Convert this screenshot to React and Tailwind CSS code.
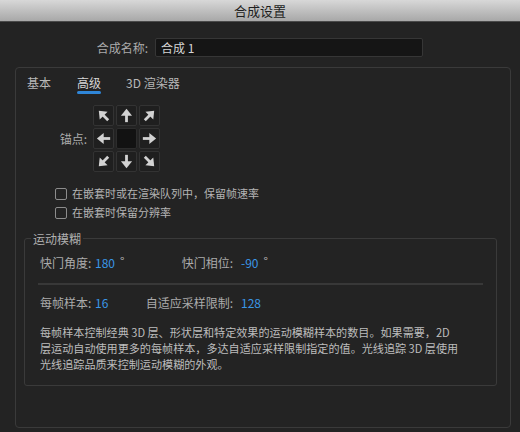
import React from "react";

const Arrow = ({ rot }) => (
  <svg width="15" height="15" viewBox="0 0 14 14" className={rot}>
    <polygon points="7,0.8 1.8,7.2 12.2,7.2" fill="#d2d2d2" />
    <rect x="5.7" y="6" width="2.6" height="7.2" fill="#d2d2d2" />
  </svg>
);

const anchors = [
  "-rotate-45",
  "rotate-0",
  "rotate-45",
  "-rotate-90",
  null,
  "rotate-90",
  "-rotate-135",
  "rotate-180",
  "rotate-135",
];

const Checkbox = ({ label }) => (
  <div className="flex items-center h-[19px]">
    <div className="w-[12px] h-[12px] border border-[#8c8c8c] rounded-[2px]" />
    <span className="ml-[5px] text-[11px] text-[#b4b4b4] leading-[19px]">{label}</span>
  </div>
);

const App = () => {
  return (
    <div className="w-[520px] h-[432px] overflow-hidden bg-[#232323] font-['Noto_Sans_CJK_SC','Noto_Sans',sans-serif] text-[12px]">
      {/* title bar */}
      <div className="h-[22px] bg-gradient-to-b from-[#d8d8d8] to-[#a8a8a8] border-b border-[#4a4a4a] flex items-center justify-center text-[13px] text-[#1e1e1e]">
        合成设置
      </div>

      {/* name */}
      <div className="flex items-center mt-[16px] h-[19px]">
        <div className="w-[148px] text-right text-[#ababab]">合成名称:</div>
        <div className="ml-[7px] w-[268px] h-[19px] bg-[#151515] border border-[#363636] rounded-[2px] flex items-center pl-[5px] text-[#d4d4d4]">
          合成 1
        </div>
      </div>

      {/* main panel */}
      <div className="mt-[10px] ml-[15px] w-[496px] h-[361px] border border-[#3a3a3a] rounded-[4px] flex flex-col">
        {/* tabs */}
        <div className="flex pt-[7px] pl-[11px] leading-[16px]">
          <div className="text-[#b8b8b8]">基本</div>
          <div className="ml-[26px] flex flex-col">
            <span className="text-[#d6d6d6]">高级</span>
            <div className="h-[3px] rounded-full bg-[#2f86d8]" />
          </div>
          <div className="ml-[25px] text-[#b8b8b8]">3D 渲染器</div>
        </div>

        {/* anchor */}
        <div className="flex items-center mt-[11px]">
          <div className="w-[71px] text-right text-[#ababab]">锚点:</div>
          <div className="ml-[6px] grid grid-cols-3 gap-[2px]">
            {anchors.map((r, i) => (
              <div
                key={i}
                className={`w-[21px] h-[21px] border rounded-[2px] flex items-center justify-center ${
                  r ? "bg-[#1f1f1f] border-[#333333]" : "bg-[#121212] border-[#2c2c2c]"
                }`}
              >
                {r && <Arrow rot={r} />}
              </div>
            ))}
          </div>
        </div>

        {/* checkboxes */}
        <div className="mt-[12px] pl-[39px] flex flex-col">
          <Checkbox label="在嵌套时或在渲染队列中，保留帧速率" />
          <Checkbox label="在嵌套时保留分辨率" />
        </div>

        {/* motion blur group */}
        <fieldset className="mt-[8px] ml-[8px] mr-[13px] border border-[#3a3a3a] rounded-[3px] pb-[13px]">
          <legend className="ml-[6px] px-[2px] text-[#b0b0b0] leading-[17px]">运动模糊</legend>
          <div className="pt-[7px] pl-[15px] flex items-center h-[25px] leading-[18px]">
            <div className="w-[55px] text-[#ababab]">快门角度:</div>
            <div className="w-[50px] text-[#3a96e6]">
              180<span className="ml-[5px] text-[#bcbcbc] relative top-[-2px]">°</span>
            </div>
            <div className="w-[88px] text-right text-[#ababab]">快门相位:</div>
            <div className="ml-[8px] text-[#3a96e6]">
              -90<span className="ml-[5px] text-[#bcbcbc] relative top-[-2px]">°</span>
            </div>
          </div>
          <div className="mt-[11px] mx-[13px] h-[2px] bg-[#383838]" />
          <div className="mt-[9px] pl-[15px] flex items-center h-[18px]">
            <div className="w-[55px] text-[#ababab]">每帧样本:</div>
            <div className="w-[50px] text-[#3a96e6]">16</div>
            <div className="w-[88px] text-right text-[#ababab]">自适应采样限制:</div>
            <div className="ml-[8px] text-[#3a96e6]">128</div>
          </div>
          <p className="mt-[12px] pl-[15px] text-[11.1px] leading-[16px] text-[#bdbdbd] whitespace-nowrap">
            每帧样本控制经典 3D 层、形状层和特定效果的运动模糊样本的数目。如果需要，2D
            <br />
            层运动自动使用更多的每帧样本，多达自适应采样限制指定的值。光线追踪 3D 层使用
            <br />
            光线追踪品质来控制运动模糊的外观。
          </p>
        </fieldset>
      </div>
    </div>
  );
};

export default App;
